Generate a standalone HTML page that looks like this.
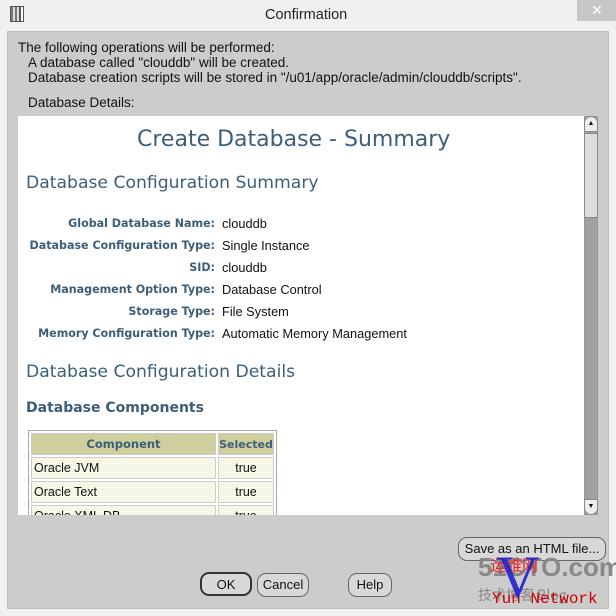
<!DOCTYPE html>
<html><head><style>
*{margin:0;padding:0;box-sizing:border-box}
body{width:616px;height:616px;background:#f0f0f0;position:relative;overflow:hidden;font-family:"Liberation Sans",sans-serif;font-size:13.5px;color:#111}
.a{position:absolute;white-space:nowrap}
.panel{position:absolute;left:7px;top:31px;width:602px;height:578px;background:#cccccc;border:1px solid #bdbdbd}
.white{position:absolute;left:18px;top:116px;width:566px;height:399px;background:#fff;overflow:hidden}
.h{color:#3d5e78;font-family:"DejaVu Sans",sans-serif}
.lb{color:#3d5e78;font-weight:bold;font-family:"DejaVu Sans",sans-serif;font-size:11.1px;text-align:right;width:197px}
.v{font-size:12.8px}
.btn{position:absolute;border:1px solid #666;border-radius:9px;background:#d8d8d8;text-align:center;font-size:13px;line-height:22px;height:24px}
td{border:1px solid #ccc;height:22px;font-size:12.5px;padding:0 2px}
</style></head><body>
<div class="a" style="left:10px;top:6px;width:14px;height:16px;background:linear-gradient(90deg,#777 0 2px,#ddd 2px 4px,#777 4px 6px,#ddd 6px 8px,#555 8px 10px,#fff 10px);border:1px solid #555"></div>
<div class="a" style="left:265px;top:7px;font-size:14.5px;color:#222">Confirmation</div>
<div class="a" style="left:577px;top:0;width:40px;height:21px;background:#c7c7c7;color:#fff;text-align:center;font-size:14px;line-height:21px">✕</div>
<div class="panel"></div>
<div class="a" style="left:18px;top:40px">The following operations will be performed:</div>
<div class="a" style="left:28px;top:55px">A database called "clouddb" will be created.</div>
<div class="a" style="left:28px;top:70px">Database creation scripts will be stored in "/u01/app/oracle/admin/clouddb/scripts".</div>
<div class="a" style="left:28px;top:95px">Database Details:</div>
<div class="white">
<div class="a h" style="left:119px;top:11px;font-size:22px">Create Database - Summary</div>
<div class="a h" style="left:8px;top:57px;font-size:17.2px">Database Configuration Summary</div>
<div class="a lb" style="left:0;top:101px">Global Database Name:</div><div class="a v" style="left:204px;top:100px">clouddb</div>
<div class="a lb" style="left:0;top:123px">Database Configuration Type:</div><div class="a v" style="left:204px;top:122px">Single Instance</div>
<div class="a lb" style="left:0;top:145px">SID:</div><div class="a v" style="left:204px;top:144px">clouddb</div>
<div class="a lb" style="left:0;top:167px">Management Option Type:</div><div class="a v" style="left:204px;top:166px">Database Control</div>
<div class="a lb" style="left:0;top:189px">Storage Type:</div><div class="a v" style="left:204px;top:188px">File System</div>
<div class="a lb" style="left:0;top:211px">Memory Configuration Type:</div><div class="a v" style="left:204px;top:210px">Automatic Memory Management</div>
<div class="a h" style="left:8px;top:246px;font-size:17.2px">Database Configuration Details</div>
<div class="a h" style="left:8px;top:284px;font-size:14px;font-weight:bold">Database Components</div>
<table class="a" style="left:10px;top:314px;border:1px solid #aaa;border-spacing:2px;background:#fff">
<tr><td style="width:185px;background:#cfcf9e;color:#3d5e78;font-weight:bold;text-align:center;font-family:'DejaVu Sans',sans-serif;font-size:11.5px">Component</td><td style="width:56px;background:#cfcf9e;color:#3d5e78;font-weight:bold;text-align:center;font-family:'DejaVu Sans',sans-serif;font-size:11px;padding:0">Selected</td></tr>
<tr><td style="background:#f7f7e7">Oracle JVM</td><td style="background:#f7f7e7;text-align:center">true</td></tr>
<tr><td style="background:#f7f7e7">Oracle Text</td><td style="background:#f7f7e7;text-align:center">true</td></tr>
<tr><td style="background:#f7f7e7">Oracle XML DB</td><td style="background:#f7f7e7;text-align:center">true</td></tr>
</table>
</div>
<div class="a" style="left:584px;top:116px;width:14px;height:399px;background:#a0a0a0;border:1px solid #999"></div>
<div class="a" style="left:584px;top:116px;width:14px;height:16px;background:#eee;border:1px solid #888;border-radius:7px 7px 0 0;font-size:7px;text-align:center;line-height:14px">▲</div>
<div class="a" style="left:584px;top:133px;width:14px;height:85px;background:#ddd;border:1px solid #888"></div>
<div class="a" style="left:584px;top:499px;width:14px;height:16px;background:#eee;border:1px solid #888;border-radius:0 0 7px 7px;font-size:7px;text-align:center;line-height:14px">▼</div>
<div class="btn" style="left:458px;top:537px;width:148px">Save as an HTML file...</div>
<div class="btn" style="left:200px;top:572px;width:52px;border:2px solid #333">OK</div>
<div class="btn" style="left:257px;top:573px;width:52px">Cancel</div>
<div class="btn" style="left:348px;top:573px;width:44px">Help</div>
<div class="a" style="left:478px;top:552px;color:#888;font-size:26px;font-family:'Liberation Sans',sans-serif;font-weight:bold">51CTO.com</div>
<div class="a" style="left:490px;top:552px;color:#e22;font-size:16px;font-family:'Noto Sans CJK SC',sans-serif">运维网</div>
<div class="a" style="left:478px;top:585px;color:#888;font-size:14px;font-family:'Noto Sans CJK SC',sans-serif">技术博客 Blog</div>
<div class="a" style="left:492px;top:590px;color:#c00;font-size:16px;font-family:'Liberation Mono',monospace">Yun Network</div>
<div class="a" style="left:496px;top:547px;color:#22c;font-size:60px;line-height:60px;font-family:'Liberation Serif',serif;opacity:.9">V</div>
</body></html>
